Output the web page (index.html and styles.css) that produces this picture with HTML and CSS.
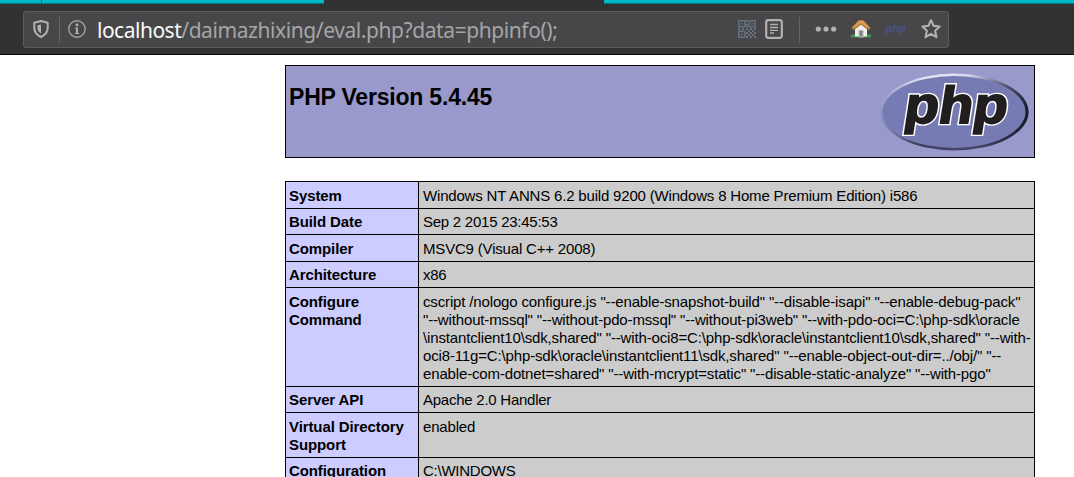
FILE: index.html
```html
<!DOCTYPE html>
<html lang="en">
<head>
    <meta charset="UTF-8">
    <meta name="viewport" content="width=device-width, initial-scale=1.0">
    <title>phpinfo()</title>
    <link rel="stylesheet" href="styles.css">
</head>
<body>
    <div class="browser">
        <div class="tab-strip">
            <span class="tab-line first"></span>
            <span class="tab-line second"></span>
            <span class="tab-active"></span>
            <span class="tab-line rest"></span>
        </div>
        <div class="toolbar">
            <div class="url-bar">
                <svg class="icon shield" width="18" height="20" viewBox="0 0 18 20">
                    <path d="M9 2 L15.700 3.700 V9 C15.700 13 13 16 9 18 C5 16 2.300 13 2.300 9 V3.700 Z" fill="none" stroke="#b1b1b3" stroke-width="2" stroke-linejoin="round"/>
                    <path d="M9 5.500 V14.500 C6.700 13 5.500 11.500 5.500 9 V6.200 Z" fill="#b1b1b3"/>
                </svg>
                <span class="divider"></span>
                <svg class="icon info" width="20" height="20" viewBox="0 0 20 20">
                    <circle cx="10" cy="10" r="8.200" fill="none" stroke="#a0a0a2" stroke-width="1.400"/>
                    <circle cx="10" cy="5.900" r="1.400" fill="#b1b1b3"/>
                    <path d="M8 8.500 H11 V14 H12.200 V15 H7.800 V14 H9 V9.500 H8 Z" fill="#b1b1b3"/>
                </svg>
                <div class="url"><span class="host">localhost</span><span class="path">/daimazhixing/eval.php?data=phpinfo();</span></div>
                <svg class="icon qr" width="18" height="18" viewBox="0 0 18 18">
                    <g fill="none" stroke="#66717e" stroke-width="1.500">
                        <rect x="0.800" y="0.800" width="6" height="6"/>
                        <rect x="11.200" y="0.800" width="6" height="6"/>
                        <rect x="0.800" y="11.200" width="6" height="6"/>
                    </g>
                    <g fill="#66717e">
                        <rect x="3" y="3" width="1.700" height="1.700"/>
                        <rect x="13.400" y="3" width="1.700" height="1.700"/>
                        <rect x="3" y="13.400" width="1.700" height="1.700"/>
                        <path d="M8 0h2v2h-2zM8 4h2v3h-2zM0 8h2v2h-2zM4 8h2v2h-2zM8 8h2v2h-2zM12 8h2v2h-2zM16 8h2v2h-2zM10 10h2v2h-2zM14 10h2v2h-2zM8 12h2v2h-2zM12 12h2v2h-2zM16 12h2v2h-2zM10 14h2v2h-2zM14 14h2v2h-2zM8 16h2v2h-2zM12 16h2v2h-2zM16 16h2v2h-2z"/>
                    </g>
                </svg>
                <svg class="icon reader" width="18" height="20" viewBox="0 0 18 20">
                    <rect x="1.200" y="1.200" width="15.600" height="17.600" rx="2" fill="none" stroke="#b1b1b3" stroke-width="2.200"/>
                    <path d="M5 5.500 H13 M5 8.500 H13 M5 11.300 H13 M5 14 H9" stroke="#b1b1b3" stroke-width="1.300"/>
                </svg>
                <span class="divider actions"></span>
                <svg class="icon dots" width="22" height="6" viewBox="0 0 22 6">
                    <g fill="#b1b1b3">
                        <circle cx="3.300" cy="3" r="2.600"/>
                        <circle cx="11" cy="3" r="2.600"/>
                        <circle cx="18.700" cy="3" r="2.600"/>
                    </g>
                </svg>
                <svg class="icon home" width="20" height="20" viewBox="0 0 20 20">
                    <path d="M0 16 Q3 14.500 5 16 H15 Q17 14.500 20 16 V18.500 H0 Z" fill="#3f9646"/>
                    <path d="M4 10 L10 5 L16 10 V17.500 H4 Z" fill="#eeeeec"/>
                    <rect x="8" y="11.500" width="4" height="6.500" fill="#858585" stroke="#b8b8b6"/>
                    <path d="M7.500 1 H12.500 L19.800 9 L17.800 11.500 L10 5.500 L2.200 11.500 L0.200 9 Z" fill="#a96b2d"/>
                    <path d="M8 1.800 H12 L18.500 8.600 L17 9.500 L10 4.300 L3 9.500 L1.500 8.600 Z" fill="#db9d54"/>
                </svg>
                <span class="php-badge">php</span>
                <svg class="icon star" width="22" height="22" viewBox="0 0 22 22">
                    <path d="M11 2.300 L13.600 7.900 L19.700 8.500 L15.100 12.700 L16.500 19.100 L11 15.800 L5.500 19.100 L6.900 12.700 L2.300 8.500 L8.400 7.900 Z" fill="none" stroke="#b1b1b3" stroke-width="2.100" stroke-linejoin="round"/>
                </svg>
            </div>
        </div>
    </div>

    <div class="center">
        <div class="header">
            <h1>PHP Version 5.4.45</h1>
            <svg class="logo" width="150" height="84" viewBox="0 0 150 84">
                <defs>
                    <linearGradient id="rim" x1="0.3" y1="0" x2="0.7" y2="1">
                        <stop offset="0" stop-color="#f0f0f8"/>
                        <stop offset="0.25" stop-color="#b9bbdd"/>
                        <stop offset="0.5" stop-color="#777bb3"/>
                        <stop offset="0.75" stop-color="#33354f"/>
                        <stop offset="1" stop-color="#4c4f78"/>
                    </linearGradient>
                    <linearGradient id="rimSide" x1="0" y1="0" x2="1" y2="0">
                        <stop offset="0" stop-color="#8589be" stop-opacity="0.7"/>
                        <stop offset="0.3" stop-color="#8589be" stop-opacity="0"/>
                        <stop offset="0.6" stop-color="#22232f" stop-opacity="0"/>
                        <stop offset="1" stop-color="#17171f" stop-opacity="0.9"/>
                    </linearGradient>
                </defs>
                <ellipse cx="74.500" cy="42" rx="74" ry="38.500" fill="url(#rim)"/>
                <ellipse cx="74.500" cy="42" rx="74" ry="38.500" fill="url(#rimSide)"/>
                <ellipse cx="74" cy="42" rx="71.500" ry="36" fill="#777bb3"/>
                <g transform="translate(22.500 52.500) skewX(-9)">
                    <text class="logo-text outline" textLength="103" lengthAdjust="spacingAndGlyphs">php</text>
                    <text class="logo-text" textLength="103" lengthAdjust="spacingAndGlyphs">php</text>
                </g>
            </svg>
        </div>

        <table>
            <tr class="tall"><td class="e">System</td><td class="v">Windows NT ANNS 6.2 build 9200 (Windows 8 Home Premium Edition) i586</td></tr>
            <tr class="raised"><td class="e">Build Date</td><td class="v">Sep 2 2015 23:45:53</td></tr>
            <tr class="tall"><td class="e">Compiler</td><td class="v">MSVC9 (Visual C++ 2008)</td></tr>
            <tr class="raised"><td class="e">Architecture</td><td class="v">x86</td></tr>
            <tr class="command"><td class="e">Configure Command</td><td class="v">cscript /nologo configure.js "--enable-snapshot-build" "--disable-isapi" "--enable-debug-pack"<br>"--without-mssql" "--without-pdo-mssql" "--without-pi3web" "--with-pdo-oci=C:\php-sdk\oracle<br>\instantclient10\sdk,shared" "--with-oci8=C:\php-sdk\oracle\instantclient10\sdk,shared" "--with-<br>oci8-11g=C:\php-sdk\oracle\instantclient11\sdk,shared" "--enable-object-out-dir=../obj/" "--<br>enable-com-dotnet=shared" "--with-mcrypt=static" "--disable-static-analyze" "--with-pgo"</td></tr>
            <tr class="raised"><td class="e">Server API</td><td class="v">Apache 2.0 Handler</td></tr>
            <tr class="double"><td class="e">Virtual Directory Support</td><td class="v">enabled</td></tr>
            <tr class="raised"><td class="e">Configuration</td><td class="v">C:\WINDOWS</td></tr>
        </table>
    </div>
</body>
</html>
```
FILE: styles.css
```css
* {
    box-sizing: border-box;
}
body {
    margin: 0;
    height: 477px;
    overflow: hidden;
    background: #ffffff;
    color: #000000;
    font-family: "Liberation Sans", Arial, sans-serif;
}

/* browser chrome */
.browser {
    height: 55px;
    background: #323234;
    border-bottom: 1px solid #0c0c0d;
}
.tab-strip {
    display: flex;
    height: 4px;
}
.tab-line {
    background: #00b7c8;
    border-bottom: 1px solid #087580;
}
.tab-line.first {
    width: 42px;
    border-right: 1px solid #087580;
}
.tab-line.second {
    width: 282px;
}
.tab-active {
    width: 280px;
}
.tab-line.rest {
    flex: 1;
}
.toolbar {
    padding: 7px 0 0 23px;
}
.url-bar {
    display: flex;
    align-items: center;
    width: 926px;
    height: 37px;
    padding-left: 8px;
    background: #474749;
    border: 1px solid #5c5c5e;
    border-radius: 3px;
}
.icon {
    display: block;
    flex: none;
}
.shield, .info, .qr, .reader, .dots, .home, .star {
    margin-top: -1px;
}
.divider {
    flex: none;
    width: 1px;
    height: 26px;
    margin: 0 7px 0 9px;
    background: #5f6670;
}
.url {
    flex: none;
    width: 641px;
    font-family: "Noto Sans", "Open Sans", sans-serif;
    font-size: 21px;
    line-height: 34px;
    white-space: nowrap;
    margin-left: 10px;
}
.host {
    color: #f9f9fa;
    letter-spacing: -0.5px;
}
.path {
    color: #a5a5a7;
    letter-spacing: -0.42px;
}
.reader {
    margin-left: 9px;
}
.divider.actions {
    margin: 0 15px 0 16px;
}
.home {
    margin-left: 14px;
}
.php-badge {
    flex: none;
    width: 21px;
    margin: 0 13px 3px 15px;
    color: #47518b;
    font-size: 11px;
    font-weight: bold;
    transform: skewX(-9deg);
}

/* phpinfo page */
.center {
    width: 750px;
    margin: 10px 0 0 285px;
}
.header {
    display: flex;
    justify-content: space-between;
    height: 93px;
    padding: 4px 4px 0 3px;
    background: #9999cc;
    border: 1px solid #000000;
}
h1 {
    margin: 14px 0 0;
    font-size: 23px;
    line-height: 27px;
    letter-spacing: -0.2px;
}
.logo-text {
    font-size: 52px;
    font-weight: bold;
    fill: #211e20;
    stroke: #211e20;
    stroke-width: 1.8px;
}
.logo-text.outline {
    stroke: #ffffff;
    stroke-width: 4.5px;
}
table {
    width: 750px;
    margin-top: 23px;
    border-collapse: collapse;
    table-layout: fixed;
}
tr {
    height: 26px;
}
.tall {
    height: 27px;
}
.command {
    height: 99px;
}
.double {
    height: 45px;
}
td {
    padding: 5px 4px 2px;
    border: 1px solid #000000;
    font-size: 15px;
    line-height: 18px;
    letter-spacing: -0.18px;
    vertical-align: top;
}
.command td {
    letter-spacing: -0.15px;
}
.raised td {
    padding-top: 4px;
}
.raised .v {
    letter-spacing: -0.25px;
}
td.e {
    width: 133px;
    padding-left: 3px;
    background: #ccccff;
    font-weight: bold;
    letter-spacing: -0.1px;
}
.v {
    background: #cccccc;
    white-space: nowrap;
}
```
